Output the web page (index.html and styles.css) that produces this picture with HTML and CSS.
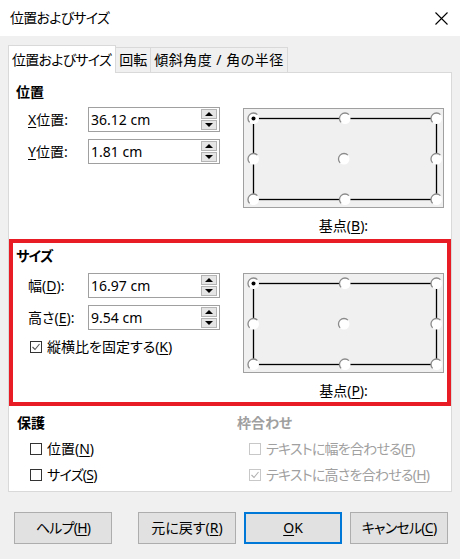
FILE: index.html
```html
<!DOCTYPE html>
<html lang="ja">
<head>
<meta charset="utf-8">
<title>位置およびサイズ</title>
<link rel="stylesheet" href="styles.css">
</head>
<body>
<svg width="0" height="0" class="defs">
  <defs>
    <g id="pt">
      <circle r="5.5" fill="#fff"/>
      <path d="M3.9 -3.9 A5.5 5.5 0 0 0 -3.9 3.9" fill="none" stroke="#8a8a8a" stroke-width="1.3"/>
    </g>
  </defs>
</svg>
<div class="titlebar">
  <span class="k">位置およびサイズ</span>
  <svg class="close" width="13" height="13" viewBox="0 0 13 13"><path d="M0.5 0.5L12.5 12.5M12.5 0.5L0.5 12.5" stroke="#000" stroke-width="1.1"/></svg>
</div>
<div class="tabs">
  <div class="tab active k">位置およびサイズ</div>
  <div class="tab">回転</div>
  <div class="tab wide">傾斜角度 / 角の半径</div>
</div>
<div class="panel">
  <div class="section pos">
    <div class="heading">位置</div>
    <div class="body">
      <div class="fields">
        <div class="field"><label><u>X</u>位置:</label><div class="spin"><span>36.12 cm</span><div class="spin-btns"><div class="spin-btn"><i class="up"></i></div><div class="spin-btn"><i class="down"></i></div></div></div></div>
        <div class="field"><label><u>Y</u>位置:</label><div class="spin"><span>1.81 cm</span><div class="spin-btns"><div class="spin-btn"><i class="up"></i></div><div class="spin-btn"><i class="down"></i></div></div></div></div>
      </div>
      <div class="point">
        <svg width="201" height="100" viewBox="0 0 201 100">
          <rect x="0.5" y="0.5" width="200" height="99" fill="#f0f0f0" stroke="#a0a0a0"/>
          <rect x="10.5" y="10.5" width="183" height="81" fill="none" stroke="#000" stroke-width="1.3"/>
          <use href="#pt" x="10.5" y="10.5"/><use href="#pt" x="102" y="10.5"/><use href="#pt" x="193.5" y="10.5"/>
          <use href="#pt" x="10.5" y="51"/><use href="#pt" x="101" y="51"/><use href="#pt" x="193.5" y="51"/>
          <use href="#pt" x="10.5" y="91.5"/><use href="#pt" x="102" y="91.5"/><use href="#pt" x="193.5" y="91.5"/>
          <circle cx="10.5" cy="10.5" r="2" fill="#000"/>
        </svg>
        <div class="point-label">基点(<u>B</u>):</div>
      </div>
    </div>
  </div>
  <div class="section size">
    <div class="heading k">サイズ</div>
    <div class="body">
      <div class="fields">
        <div class="field"><label>幅(<u>D</u>):</label><div class="spin"><span>16.97 cm</span><div class="spin-btns"><div class="spin-btn"><i class="up"></i></div><div class="spin-btn"><i class="down"></i></div></div></div></div>
        <div class="field"><label>高さ(<u>E</u>):</label><div class="spin"><span>9.54 cm</span><div class="spin-btns"><div class="spin-btn"><i class="up"></i></div><div class="spin-btn"><i class="down"></i></div></div></div></div>
        <div class="check-row"><svg class="cb" width="12" height="12" viewBox="0 0 12 12"><rect x="0.5" y="0.5" width="11" height="11" fill="#fff" stroke="#333"/><polyline points="2.5,6 5,8.5 9.5,3" fill="none" stroke="#555" stroke-width="1.1"/></svg><span>縦横比を固定する(<u>K</u>)</span></div>
      </div>
      <div class="point">
        <svg width="201" height="100" viewBox="0 0 201 100">
          <rect x="0.5" y="0.5" width="200" height="99" fill="#f0f0f0" stroke="#a0a0a0"/>
          <rect x="10.5" y="10.5" width="183" height="81" fill="none" stroke="#000" stroke-width="1.3"/>
          <use href="#pt" x="10.5" y="10.5"/><use href="#pt" x="102" y="10.5"/><use href="#pt" x="193.5" y="10.5"/>
          <use href="#pt" x="10.5" y="51"/><use href="#pt" x="101" y="51"/><use href="#pt" x="193.5" y="51"/>
          <use href="#pt" x="10.5" y="91.5"/><use href="#pt" x="102" y="91.5"/><use href="#pt" x="193.5" y="91.5"/>
          <circle cx="10.5" cy="10.5" r="2" fill="#000"/>
        </svg>
        <div class="point-label">基点(<u>P</u>):</div>
      </div>
    </div>
  </div>
  <div class="protect">
    <div class="pcol left">
      <div class="heading">保護</div>
      <div class="prow"><svg class="cb" width="12" height="12" viewBox="0 0 12 12"><rect x="0.5" y="0.5" width="11" height="11" fill="#fff" stroke="#333"/></svg><span>位置(<u>N</u>)</span></div>
      <div class="prow"><svg class="cb" width="12" height="12" viewBox="0 0 12 12"><rect x="0.5" y="0.5" width="11" height="11" fill="#fff" stroke="#333"/></svg><span class="k">サイズ(<u>S</u>)</span></div>
    </div>
    <div class="pcol right disabled">
      <div class="heading">枠合わせ</div>
      <div class="prow"><svg class="cb" width="12" height="12" viewBox="0 0 12 12"><rect x="0.5" y="0.5" width="11" height="11" fill="#fff" stroke="#c8c8c8"/></svg><span class="k">テキストに幅を合わせる(<u>F</u>)</span></div>
      <div class="prow"><svg class="cb" width="12" height="12" viewBox="0 0 12 12"><rect x="0.5" y="0.5" width="11" height="11" fill="#fff" stroke="#c8c8c8"/><polyline points="2.5,6 5,8.5 9.5,3" fill="none" stroke="#b0b0b0" stroke-width="1.1"/></svg><span class="k">テキストに高さを合わせる(<u>H</u>)</span></div>
    </div>
  </div>
</div>
<div class="buttons">
  <div class="btn help k">ヘルプ(<u>H</u>)</div>
  <div class="btn">元に戻す(<u>R</u>)</div>
  <div class="btn default"><u>O</u>K</div>
  <div class="btn k">キャンセル(<u>C</u>)</div>
</div>
</body>
</html>
```

FILE: styles.css
```css
html, body {
  margin: 0;
  padding: 0;
}
body {
  width: 460px;
  height: 559px;
  overflow: hidden;
  background: #f0f0f0;
  font-family: "Noto Sans", "Noto Sans CJK JP", sans-serif;
  font-size: 14px;
  line-height: 20px;
  color: #000;
  font-feature-settings: "palt";
}
.defs {
  display: block;
  width: 0;
  height: 0;
}
u {
  text-underline-offset: 2px;
}
.k {
  letter-spacing: -0.75px;
}
.titlebar {
  height: 36px;
  background: #fff;
  display: flex;
  align-items: center;
  justify-content: space-between;
  padding: 0 12px 0 10px;
  box-sizing: border-box;
}
.tabs {
  display: flex;
  align-items: flex-end;
  height: 27px;
  margin-top: 9px;
  padding-left: 8px;
}
.tab {
  height: 25px;
  box-sizing: border-box;
  border: 1px solid #d9d9d9;
  border-left: none;
  border-bottom: none;
  padding: 0 3px;
  display: flex;
  align-items: center;
  background: #f0f0f0;
}
.tab.active {
  height: 28px;
  margin-bottom: -1px;
  background: #fff;
  border-left: 1px solid #d9d9d9;
  position: relative;
  z-index: 1;
  padding: 0 4px 0 3px;
}
.tab.wide {
  letter-spacing: 0.5px;
}
.panel {
  margin: 0 8px;
  height: 420px;
  box-sizing: border-box;
  border: 1px solid #d9d9d9;
  background: #fff;
}
.section {
  border: 4px solid transparent;
  padding: 5px 2px 0 3px;
}
.section.size {
  border-color: #e81c24;
  padding: 3px 2px 2px 3px;
}
.heading {
  font-weight: 700;
  height: 20px;
}
.body {
  display: flex;
  margin-top: 5px;
}
.size .body {
  margin-top: 7px;
}
.fields {
  width: 204px;
  display: flex;
  flex-direction: column;
  gap: 7px;
  padding-left: 12px;
  box-sizing: border-box;
}
.field {
  display: flex;
  align-items: center;
  height: 25px;
}
.field label {
  width: 60px;
  flex: none;
}
.spin {
  width: 132px;
  height: 25px;
  flex: none;
  box-sizing: border-box;
  border: 1px solid #a0a0a0;
  display: flex;
  align-items: center;
  padding-left: 2px;
}
.spin-btns {
  margin-left: auto;
  margin-right: 2px;
  display: flex;
  flex-direction: column;
  gap: 1px;
}
.spin-btn {
  width: 16px;
  height: 10px;
  box-sizing: border-box;
  background: #e5e5e5;
  border: 1px solid #b4b4b4;
  display: flex;
  align-items: center;
  justify-content: center;
}
.spin-btn i {
  display: block;
  width: 0;
  height: 0;
  border-left: 4px solid transparent;
  border-right: 4px solid transparent;
}
.spin-btn .up {
  border-bottom: 4px solid #000;
}
.spin-btn .down {
  border-top: 4px solid #000;
}
.check-row {
  display: flex;
  align-items: center;
  height: 20px;
  margin-left: 2px;
}
.cb {
  flex: none;
  margin-right: 5px;
}
.point {
  margin-left: 23px;
  margin-top: 1px;
  width: 201px;
  display: flex;
  flex-direction: column;
  align-items: center;
}
.point svg {
  display: block;
}
.size .point {
  margin-top: 0;
}
.point-label {
  margin-top: 9px;
  line-height: 18px;
}
.protect {
  display: flex;
  margin-top: 7px;
}
.pcol.left {
  width: 228px;
  padding-left: 8px;
  box-sizing: border-box;
}
.pcol.right {
  flex: 1;
}
.prow {
  display: flex;
  align-items: center;
  height: 20px;
  margin-top: 6px;
  margin-left: 13px;
}
.pcol.right .prow {
  margin-left: 12px;
}
.disabled {
  color: #a0a0a0;
}
.buttons {
  display: flex;
  margin-top: 20px;
  padding-left: 14px;
  gap: 8px;
}
.btn {
  width: 98px;
  height: 32px;
  box-sizing: border-box;
  border: 1px solid #adadad;
  background: #e1e1e1;
  display: flex;
  align-items: center;
  justify-content: center;
}
.btn.help {
  margin-right: 18px;
}
.btn.default {
  border: 2px solid #0078d7;
}
```
